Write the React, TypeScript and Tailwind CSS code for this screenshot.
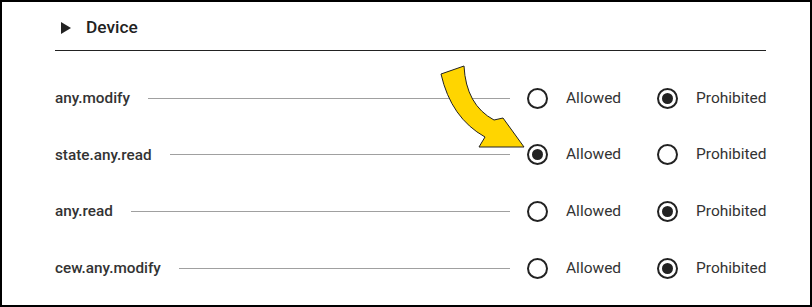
import { useState } from 'react';

type Choice = 'allowed' | 'prohibited';

interface Permission {
  name: string;
  value: Choice;
}

const initialPermissions: Permission[] = [
  { name: 'any.modify', value: 'prohibited' },
  { name: 'state.any.read', value: 'allowed' },
  { name: 'any.read', value: 'prohibited' },
  { name: 'cew.any.modify', value: 'prohibited' },
];

function Radio({ checked, label, onSelect }: { checked: boolean; label: string; onSelect: () => void }) {
  return (
    <button type="button" onClick={onSelect} className="flex items-center text-left">
      <span className="flex h-[21px] w-[21px] items-center justify-center rounded-full border-2 border-[#222]">
        {checked && <span className="h-[11px] w-[11px] rounded-full bg-[#222]" />}
      </span>
      <span className="ml-[18px] text-[15.5px] text-[#333]">{label}</span>
    </button>
  );
}

export default function App() {
  const [permissions, setPermissions] = useState(initialPermissions);

  const setValue = (name: string, value: Choice) => {
    setPermissions((prev) => prev.map((p) => (p.name === name ? { ...p, value } : p)));
  };

  return (
    <div
      className="relative h-[307px] w-[812px] border-2 border-black bg-white pl-[53px] pr-[44px]"
      style={{ fontFamily: 'Roboto, "Liberation Sans", sans-serif' }}
    >
      {/* Section header */}
      <div className="flex h-[49px] items-center border-b border-[#222] pt-[4px]">
        <svg width="10" height="12" viewBox="0 0 10 12" className="ml-[6px]">
          <polygon points="0,0 10,6 0,12" fill="#222" />
        </svg>
        <span className="ml-[15px] text-[17.3px] font-medium text-[#222]">Device</span>
      </div>

      <div className="mt-[19px]">
        {permissions.map((p) => (
          <div key={p.name} className="flex h-[56.67px] items-center">
            <span className="text-[15.3px] font-medium text-[#333]">{p.name}</span>
            <div className="ml-[18px] h-px flex-1 bg-[#a0a0a0]" />
            <div className="ml-[17px] w-[130px]">
              <Radio checked={p.value === 'allowed'} label="Allowed" onSelect={() => setValue(p.name, 'allowed')} />
            </div>
            <div className="w-[109px]">
              <Radio
                checked={p.value === 'prohibited'}
                label="Prohibited"
                onSelect={() => setValue(p.name, 'prohibited')}
              />
            </div>
          </div>
        ))}
      </div>

      {/* Callout arrow */}
      <svg
        width="100"
        height="100"
        viewBox="0 0 100 100"
        className="pointer-events-none absolute left-[430px] top-[55px]"
      >
        <path
          d="M9 17 L32 9 Q34 48 62 63 L71 61 L92 90 L47 90 L53 80 Q19 61 9 17 Z"
          fill="#FFD500"
          stroke="#222"
          strokeWidth="1"
          strokeLinejoin="round"
        />
      </svg>
    </div>
  );
}
